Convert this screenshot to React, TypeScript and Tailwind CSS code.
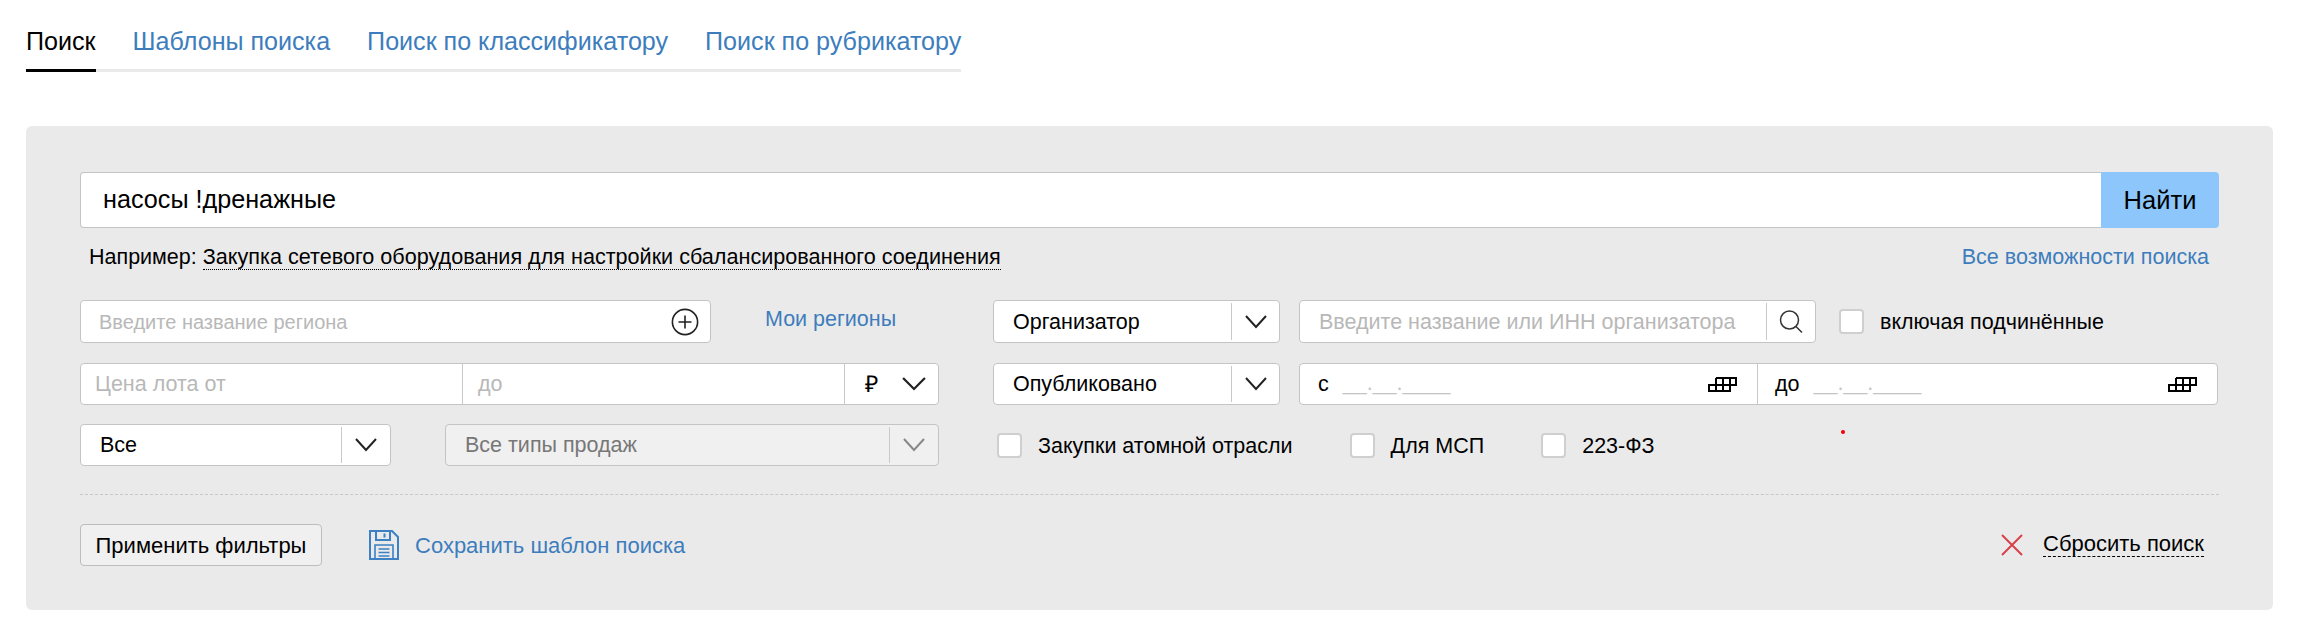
import React from "react";

const Chevron = ({ color = "#222", w = 22 }: { color?: string; w?: number }) => (
  <svg width={w} height="14" viewBox="0 0 22 14" preserveAspectRatio="none" fill="none" stroke={color} strokeWidth="2">
    <path d="M1 1l10 11L21 1" />
  </svg>
);

const Cal = () => (
  <svg width="29" height="15" viewBox="0 0 29 15" fill="none" stroke="#000" strokeWidth="2" shapeRendering="crispEdges">
    <path d="M7.5 1h20.5v6.5H21.5V14H1V7.5h20.5M7.5 1v13M14.5 1v13M21.5 1v6.5" />
  </svg>
);

const Check = ({ label, className = "" }: { label: string; className?: string }) => (
  <label className={`flex items-center ${className}`}>
    <span className="w-[25px] h-[25px] bg-white rounded-[4px] border-2 border-[#cfcfcf] shrink-0" />
    <span className="ml-4 pt-[2px] text-[21.5px] text-black whitespace-nowrap">{label}</span>
  </label>
);

const Select = ({ label, w, div, disabled = false }: { label: string; w: string; div: string; disabled?: boolean }) => (
  <div className={`flex items-center ${w} rounded-[4px] border border-[#c4c4c4] ${disabled ? "bg-[#f0f0f0] text-[#777]" : "bg-white text-black"}`}>
    <span className="flex-1 pl-[19px] pt-[1px] text-[21.5px] whitespace-nowrap">{label}</span>
    <span className={`flex items-center justify-center ${div} h-[calc(100%-4px)] border-l border-[#c9c9c9]`}>
      <Chevron color={disabled ? "#888" : "#222"} />
    </span>
  </div>
);

export default function App() {
  return (
    <div className="font-['Liberation_Sans',Arial,sans-serif] bg-white min-h-[636px] text-black pl-[26px]">
      <div className="w-fit flex gap-[37px] h-[72px] border-b-[3px] border-[#eaeaea]">
        {["Поиск", "Шаблоны поиска", "Поиск по классификатору", "Поиск по рубрикатору"].map((t, i) => (
          <div
            key={t}
            className={`h-[72px] pt-[26px] text-[25.1px] leading-[30px] whitespace-nowrap ${i === 0 ? "border-b-[3px] border-black text-black" : "text-[#3d7dbd]"}`}
          >
            {t}
          </div>
        ))}
      </div>

      <div className="mt-[54px] w-[2247px] h-[484px] bg-[#eaeaea] rounded-[6px] px-[54px] pt-[46px]">
        <div className="flex h-[56px]">
          <div className="flex-1 flex items-center bg-white border border-[#c4c4c4] border-r-0 rounded-l-[4px] pl-[22px] text-[25.2px]">
            насосы !дренажные
          </div>
          <div className="w-[118px] flex items-center justify-center bg-[#8cc6fb] rounded-r-[4px] text-[25.5px]">Найти</div>
        </div>

        <div className="flex justify-between items-center h-[28px] mt-[15px] pl-[9px] pr-[10px] text-[21.5px]">
          <div className="whitespace-nowrap leading-[24px]">
            Например:{" "}
            <span className="text-[21.6px] border-b border-dotted border-black">Закупка сетевого оборудования для настройки сбалансированного соединения</span>
          </div>
          <div className="text-[#3d7dbd]">Все возможности поиска</div>
        </div>

        <div className="flex mt-[29px] h-[43px]">
          <div className="w-[859px] mr-[54px] flex items-center">
            <div className="w-[631px] h-full flex items-center justify-between bg-white border border-[#c4c4c4] rounded-[4px] pl-[18px] pr-[11px] text-[20px] text-[#b8b8b8]">
              <span>Введите название региона</span>
              <svg width="28" height="28" viewBox="0 0 28 28" fill="none" stroke="#222" strokeWidth="1.6">
                <circle cx="14" cy="14" r="12.6" />
                <path d="M14 7.5v13M7.5 14h13" />
              </svg>
            </div>
            <span className="ml-[54px] -mt-[5px] text-[21.5px] text-[#3d7dbd] whitespace-nowrap">Мои регионы</span>
          </div>
          <Select label="Организатор" w="w-[287px]" div="w-[48px]" />
          <div className="ml-[19px] w-[517px] flex items-center bg-white border border-[#c4c4c4] rounded-[4px]">
            <span className="flex-1 pl-[19px] pt-[1px] text-[21.5px] text-[#b8b8b8] whitespace-nowrap">Введите название или ИНН организатора</span>
            <span className="w-[49px] h-[calc(100%-4px)] flex items-center justify-center border-l border-[#c9c9c9]">
              <svg width="26" height="26" viewBox="0 0 26 26" fill="none" stroke="#333" strokeWidth="1.5">
                <circle cx="11.5" cy="11" r="9" />
                <path d="M18 17.5l6 6" />
              </svg>
            </span>
          </div>
          <Check label="включая подчинённые" className="ml-[23px]" />
        </div>

        <div className="flex mt-[20px] h-[42px]">
          <div className="w-[859px] mr-[54px] flex bg-white border border-[#c4c4c4] rounded-[4px] text-[21.5px] text-[#b8b8b8]">
            <span className="w-[382px] flex items-center pl-[14px] border-r border-[#c9c9c9]">Цена лота от</span>
            <span className="w-[382px] flex items-center pl-[15px] border-r border-[#c9c9c9]">до</span>
            <span className="flex-1 flex items-center pl-[20px] gap-[24px] text-black">
              <span className="text-[23px] leading-none">₽</span>
              <Chevron w={24} />
            </span>
          </div>
          <Select label="Опубликовано" w="w-[287px]" div="w-[48px]" />
          <div className="ml-[19px] w-[919px] flex bg-white border border-[#c4c4c4] rounded-[4px] text-[21.5px]">
            <div className="w-[458px] flex items-center pl-[18px] pr-[20px] border-r border-[#c9c9c9]">
              <span>с</span>
              <span className="ml-[14px] flex-1 text-[21.5px] leading-none text-[#c4c4c4]">__.__.____</span>
              <Cal />
            </div>
            <div className="flex-1 flex items-center pl-[17px] pr-[20px]">
              <span>до</span>
              <span className="ml-[14px] flex-1 text-[21.5px] leading-none text-[#c4c4c4]">__.__.____</span>
              <Cal />
            </div>
          </div>
        </div>

        <div className="flex mt-[19px] h-[42px]">
          <div className="w-[859px] mr-[58px] flex justify-between">
            <Select label="Все" w="w-[311px]" div="w-[49px]" />
            <Select label="Все типы продаж" w="w-[494px]" div="w-[49px]" disabled />
          </div>
          <Check label="Закупки атомной отрасли" />
          <Check label="Для МСП" className="ml-[57px]" />
          <Check label="223-ФЗ" className="ml-[57px]" />
          <span className="absolute left-[1841px] top-[430px] w-[4px] h-[4px] rounded-full bg-[#f00000]" />
        </div>

        <div className="mt-[28px] border-t border-dashed border-[#c8c8c8]" />

        <div className="flex items-center mt-[29px] h-[42px] text-[22px]">
          <div className="w-[242px] h-full flex items-center justify-center bg-[#f0f0f0] border border-[#bdbdbd] rounded-[4px]">Применить фильтры</div>
          <svg className="ml-[47px]" width="30" height="30" viewBox="0 0 30 30" fill="none" stroke="#3d80c4" strokeWidth="2">
            <path d="M1 1h22l6 6v22H1z" />
            <path d="M7 1v9h14V1M15.5 3.5v4" />
            <path d="M6 29V15h18v14M9.5 19h11M9.5 22.5h11M9.5 26h11" strokeWidth="1.6" />
          </svg>
          <span className="ml-[16px] text-[#3d7dbd]">Сохранить шаблон поиска</span>
          <svg className="ml-auto" width="22" height="22" viewBox="0 0 22 22" fill="none" stroke="#d9404b" strokeWidth="2">
            <path d="M1 1l20 20M21 1L1 21" />
          </svg>
          <span className="ml-[20px] mr-[15px] -mt-[2px] leading-[24px] border-b border-dashed border-black">Сбросить поиск</span>
        </div>
      </div>
    </div>
  );
}
